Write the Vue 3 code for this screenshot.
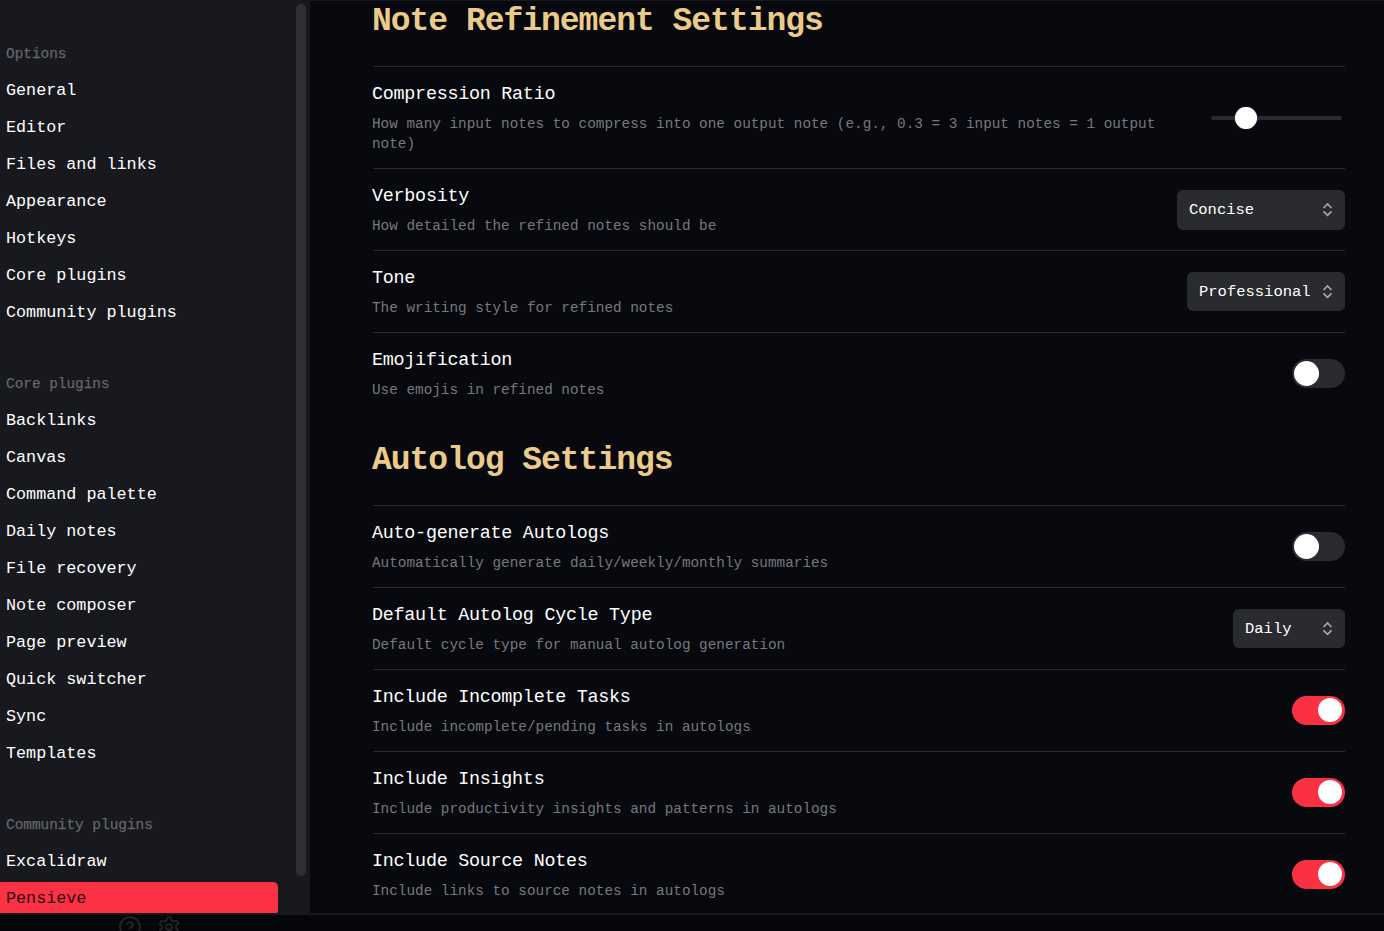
<script setup>
const groups = [
  { title: 'Options', items: ['General', 'Editor', 'Files and links', 'Appearance', 'Hotkeys', 'Core plugins', 'Community plugins'] },
  { title: 'Core plugins', items: ['Backlinks', 'Canvas', 'Command palette', 'Daily notes', 'File recovery', 'Note composer', 'Page preview', 'Quick switcher', 'Sync', 'Templates'] },
  { title: 'Community plugins', items: ['Excalidraw', 'Pensieve'] }
]
const sections = [
  {
    title: 'Note Refinement Settings',
    rows: [
      { name: 'Compression Ratio', desc: 'How many input notes to compress into one output note (e.g., 0.3 = 3 input notes = 1 output note)', type: 'slider' },
      { name: 'Verbosity', desc: 'How detailed the refined notes should be', type: 'select', value: 'Concise', size: 'wide' },
      { name: 'Tone', desc: 'The writing style for refined notes', type: 'select', value: 'Professional', size: 'medium' },
      { name: 'Emojification', desc: 'Use emojis in refined notes', type: 'toggle', on: false }
    ]
  },
  {
    title: 'Autolog Settings',
    rows: [
      { name: 'Auto-generate Autologs', desc: 'Automatically generate daily/weekly/monthly summaries', type: 'toggle', on: false },
      { name: 'Default Autolog Cycle Type', desc: 'Default cycle type for manual autolog generation', type: 'select', value: 'Daily', size: 'small' },
      { name: 'Include Incomplete Tasks', desc: 'Include incomplete/pending tasks in autologs', type: 'toggle', on: true },
      { name: 'Include Insights', desc: 'Include productivity insights and patterns in autologs', type: 'toggle', on: true },
      { name: 'Include Source Notes', desc: 'Include links to source notes in autologs', type: 'toggle', on: true }
    ]
  }
]
</script>

<template>
  <div class="window">
    <div class="modal">
      <aside class="sidebar">
        <nav class="nav">
          <section v-for="g in groups" :key="g.title" class="group">
            <div class="group-title">{{ g.title }}</div>
            <div v-for="i in g.items" :key="i" class="item" :class="{ active: i === 'Pensieve' }">{{ i }}</div>
          </section>
        </nav>
        <div class="scrollbar"></div>
      </aside>
      <main class="content">
        <section v-for="s in sections" :key="s.title" class="section">
          <h1>{{ s.title }}</h1>
          <div v-for="r in s.rows" :key="r.name" class="row">
            <div class="info">
              <div class="name">{{ r.name }}</div>
              <div class="desc">{{ r.desc }}</div>
            </div>
            <div v-if="r.type === 'slider'" class="slider"><span class="thumb"></span></div>
            <div v-else-if="r.type === 'select'" class="select" :class="r.size">
              <span>{{ r.value }}</span>
              <svg width="12" height="16" viewBox="0 0 12 16" fill="none" stroke="#a9a9ab" stroke-width="1.6">
                <path d="M1.5 6 5.5 2l4 4M1.5 9.4l4 4 4-4" />
              </svg>
            </div>
            <div v-else class="toggle" :class="{ on: r.on }"><span></span></div>
          </div>
        </section>
      </main>
    </div>
    <footer class="status">
      <svg width="24" height="24" viewBox="0 0 24 24" fill="none" stroke="#25262a" stroke-width="1.75" stroke-linecap="round" stroke-linejoin="round">
        <circle cx="12" cy="12" r="10" />
        <path d="M9.1 9a3 3 0 0 1 5.8 1c0 2-3 3-3 3M12 17h.01" />
      </svg>
      <svg width="24" height="24" viewBox="0 0 24 24" fill="none" stroke="#25262a" stroke-width="1.75" stroke-linecap="round" stroke-linejoin="round">
        <path d="M12.22 2h-.44a2 2 0 0 0-2 2v.18a2 2 0 0 1-1 1.73l-.43.25a2 2 0 0 1-2 0l-.15-.08a2 2 0 0 0-2.73.73l-.22.38a2 2 0 0 0 .73 2.73l.15.1a2 2 0 0 1 1 1.72v.51a2 2 0 0 1-1 1.74l-.15.09a2 2 0 0 0-.73 2.73l.22.38a2 2 0 0 0 2.73.73l.15-.08a2 2 0 0 1 2 0l.43.25a2 2 0 0 1 1 1.73V20a2 2 0 0 0 2 2h.44a2 2 0 0 0 2-2v-.18a2 2 0 0 1 1-1.73l.43-.25a2 2 0 0 1 2 0l.15.08a2 2 0 0 0 2.73-.73l.22-.39a2 2 0 0 0-.73-2.73l-.15-.08a2 2 0 0 1-1-1.74v-.5a2 2 0 0 1 1-1.74l.15-.09a2 2 0 0 0 .73-2.73l-.22-.38a2 2 0 0 0-2.73-.73l-.15.08a2 2 0 0 1-2 0l-.43-.25a2 2 0 0 1-1-1.73V4a2 2 0 0 0-2-2z" />
        <circle cx="12" cy="12" r="3" />
      </svg>
    </footer>
  </div>
</template>

<style>
body { margin: 0; background: #050609; overflow: hidden; }
</style>

<style scoped>
.window { width: 1384px; height: 931px; overflow: hidden; background: #050609; font-family: "Liberation Mono", monospace; color: #fff; display: flex; flex-direction: column; }
.modal { box-sizing: border-box; height: 915px; flex: none; display: flex; overflow: hidden; border-bottom: 2px solid #18191d; background: #08090e; }
.sidebar { width: 310px; flex: none; display: flex; background: #18191e; overflow: hidden; }
.nav { width: 278px; padding-top: 35px; margin-right: 18px; }
.group { display: flex; flex-direction: column; margin-bottom: 34px; }
.group-title { height: 37px; line-height: 38px; padding-left: 6px; font-size: 14.4px; color: #65666a; -webkit-text-stroke: 0.25px #65666a; white-space: pre; }
.item { height: 33px; line-height: 33px; margin: 2px 0; padding-left: 6px; font-size: 16.75px; white-space: pre; }
.active { background: #fa3244; color: #2b0b13; border-radius: 0 5px 5px 0; }
.scrollbar { width: 10px; height: 872px; margin-top: 4px; border-radius: 5px; background: #303135; }
.content { box-sizing: border-box; flex: 1; padding: 0 39px 0 63px; border-top: 1px solid #18191d; overflow: hidden; }
h1 { margin: 0 0 0 -1px; height: 65px; padding: 0; line-height: 42px; font-size: 33px; letter-spacing: -1.02px; color: #ebcb8b; font-weight: 700; white-space: pre; }
.section + .section h1 { padding-top: 26px; }
.row { display: flex; align-items: center; justify-content: space-between; border-top: 1px solid #2a2b2f; padding: 16px 0 15px; }
.info { margin-left: -1px; width: 800px; }
.name { line-height: 24px; font-size: 18.4px; letter-spacing: -0.26px; margin-bottom: 7px; }
.desc { line-height: 20px; font-size: 14.35px; color: #77787b; margin-bottom: -1px; }
.slider { width: 131px; height: 4px; margin-right: 3px; border-radius: 2px; background: #2a2b2f; position: relative; }
.thumb { position: absolute; left: 24px; top: -9px; width: 22px; height: 22px; border-radius: 50%; background: #fff; box-shadow: 0 0 1px #999; }
.select { box-sizing: border-box; height: 39px; display: flex; align-items: center; justify-content: space-between; padding: 0 11px 0 12px; border-radius: 6px; background: #2a2b2f; font-size: 15.5px; margin: -4px 0 -3px; }
.wide { width: 168px; height: 40px; margin-bottom: -4px; }
.medium { width: 158px; }
.small { width: 112px; }
.toggle { box-sizing: border-box; width: 53px; height: 29px; margin-bottom: 1px; padding: 2px; border-radius: 15px; background: #2a2b2f; display: flex; align-items: flex-start; }
.toggle span { width: 25px; height: 25px; border-radius: 50%; background: #fff; }
.toggle.on { background: #f93143; justify-content: flex-end; }
.toggle.on span { width: 24px; height: 24px; margin-right: 1px; }
.status { flex: none; height: 16px; display: flex; gap: 15px; padding-left: 118px; overflow: hidden; align-items: flex-start; }
.status svg { flex: none; }
</style>
